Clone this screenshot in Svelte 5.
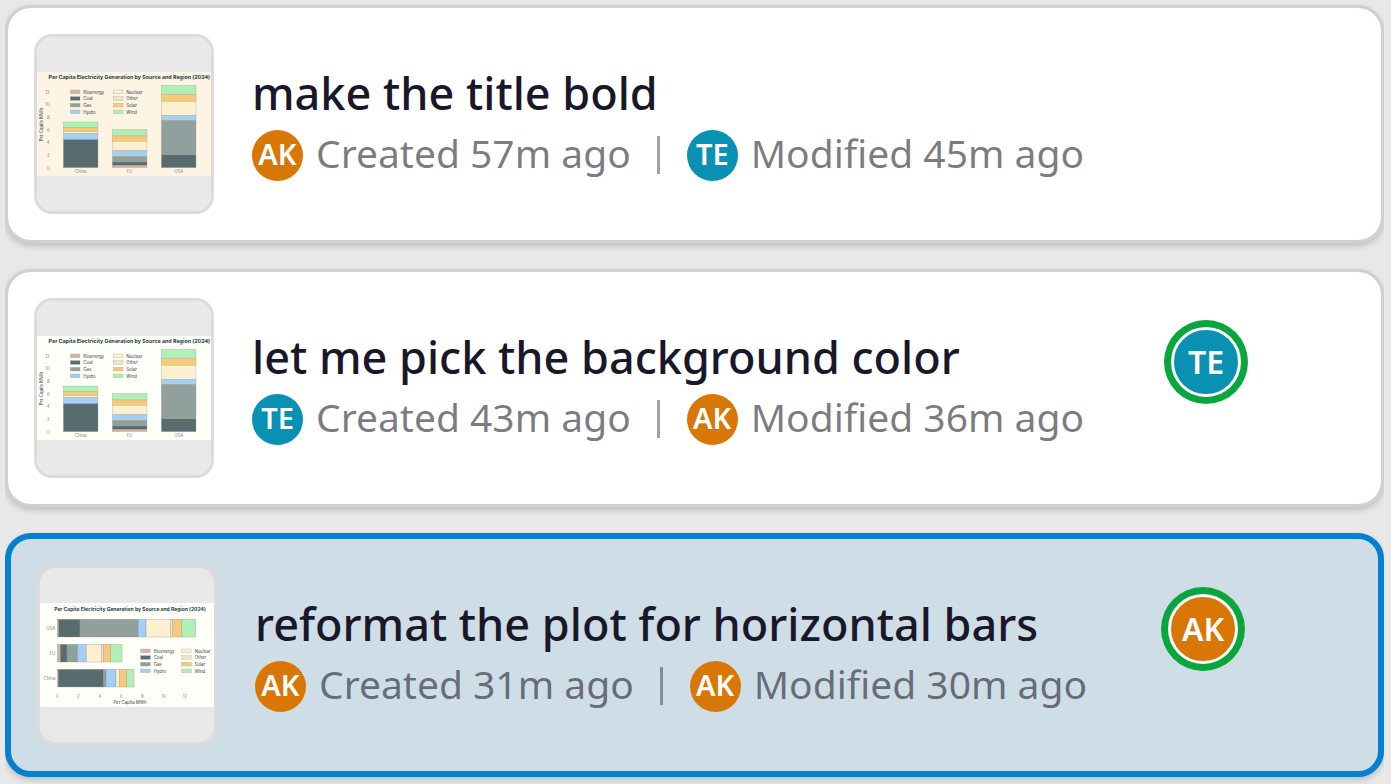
<script>
  const ink = '#1f4045';
  const colors = {
    Bioenergy: '#d5b5ab',
    Coal: '#586c70',
    Gas: '#919f9d',
    Hydro: '#a3cff7',
    Nuclear: '#fcf0d0',
    Other: '#efe3c8',
    Solar: '#f6c981',
    Wind: '#b0efb7'
  };
  const sources = Object.keys(colors);

  // Each segment: [source, start, end] along the bar's own axis.
  const columns = [
    { x: 79, label: 'China', parts: [['Wind', 150, 166], ['Solar', 166, 179], ['Nuclear', 179, 184], ['Hydro', 184, 203], ['Coal', 203, 287]] },
    { x: 226, label: 'EU', parts: [['Wind', 172, 192], ['Solar', 192, 208], ['Nuclear', 208, 236], ['Hydro', 236, 253], ['Gas', 253, 270], ['Coal', 270, 281], ['Bioenergy', 281, 287]] },
    { x: 373, label: 'USA', parts: [['Wind', 40, 67], ['Solar', 67, 88], ['Nuclear', 88, 130], ['Hydro', 130, 145], ['Gas', 145, 248], ['Coal', 248, 287]] }
  ];
  const rows = [
    { y: 49, label: 'USA', parts: [['Bioenergy', 52, 56], ['Coal', 56, 120], ['Gas', 120, 295], ['Hydro', 295, 318], ['Nuclear', 318, 391], ['Other', 391, 397], ['Solar', 397, 425], ['Wind', 425, 467]] },
    { y: 124, label: 'EU', parts: [['Bioenergy', 52, 61], ['Coal', 61, 81], ['Gas', 81, 113], ['Hydro', 113, 139], ['Nuclear', 139, 184], ['Other', 184, 190], ['Solar', 190, 212], ['Wind', 212, 246]] },
    { y: 199, label: 'China', parts: [['Bioenergy', 52, 55], ['Coal', 55, 191], ['Gas', 191, 198], ['Hydro', 198, 228], ['Nuclear', 228, 238], ['Solar', 238, 260], ['Wind', 260, 282]] }
  ];
  const ticks = [0, 2, 4, 6, 8, 10, 12];

  const tones = { AK: '#d97706', TE: '#0891b2' };
  const versions = [
    { title: 'make the title bold', by: 'AK', created: '57m', editor: 'TE', modified: '45m', paper: '#fef4e3' },
    { title: 'let me pick the background color', by: 'TE', created: '43m', editor: 'AK', modified: '36m', paper: '#fffffa', viewer: 'TE' },
    { title: 'reformat the plot for horizontal bars', by: 'AK', created: '31m', editor: 'AK', modified: '30m', paper: '#fffffa', viewer: 'AK', horizontal: true, selected: true }
  ];
</script>

{#snippet legend(x1, x2, y)}
  {#each sources as name, i}
    {@const x = i < 4 ? x1 : x2}
    {@const top = y + (i % 4) * 20}
    <rect {x} y={top} width="29" height="11" fill={colors[name]} stroke="#a69f90" stroke-width="1" />
    <text x={x + 39} y={top + 11} font-size="13" fill={ink}>{name}</text>
  {/each}
{/snippet}

{#snippet chart(version)}
  <svg class="chart" viewBox="0 0 522 312" role="img" aria-label="Per Capita Electricity Generation by Source and Region (2024)">
    <rect width="522" height="312" fill={version.paper} />
    {#if version.horizontal}
      <text x="270" y="23" text-anchor="middle" font-size="15" font-weight="700" fill={ink}>Per Capita Electricity Generation by Source and Region (2024)</text>
      {#each rows as row}
        <text x="46" y={row.y + 31} text-anchor="end" font-size="13" fill="#7e8583">{row.label}</text>
        {#each row.parts as [name, from, to]}
          <rect x={from} y={row.y} width={to - from} height="53" fill={colors[name]} stroke="#8f9286" stroke-width="1" />
        {/each}
      {/each}
      {#each ticks as tick}
        <text x={51 + tick * 32} y="286" text-anchor="middle" font-size="13" fill="#7e8583">{tick}</text>
      {/each}
      <text x="270" y="303" text-anchor="middle" font-size="13" fill={ink}>Per Capita MWh</text>
      {@render legend(302, 425, 138)}
    {:else}
      <text x="277" y="22" text-anchor="middle" font-size="16" font-weight="700" fill={ink}>Per Capita Electricity Generation by Source and Region (2024)</text>
      {#each ticks as tick}
        <text x="38" y={293 - tick * 19} text-anchor="end" font-size="13" fill="#7e8583">{tick}</text>
      {/each}
      <text transform="translate(17 158) rotate(-90)" text-anchor="middle" font-size="13" fill={ink}>Per Capita MWh</text>
      {#each columns as column}
        {#each column.parts as [name, from, to]}
          <rect x={column.x} y={from} width="104" height={to - from} fill={colors[name]} stroke="#a69f90" stroke-width="1" />
        {/each}
        <text x={column.x + 52} y="303" text-anchor="middle" font-size="13" fill="#7e8583">{column.label}</text>
      {/each}
      {@render legend(100, 229, 54)}
    {/if}
  </svg>
{/snippet}

<main>
  <ul>
    {#each versions as version}
      <li class="card" class:selected={version.selected}>
        <div class="thumb">{@render chart(version)}</div>
        <div class="info">
          <h2>{version.title}</h2>
          <div class="meta">
            <span class="avatar" style:background={tones[version.by]}>{version.by}</span>
            <span class="when">Created {version.created} ago</span>
            <span class="divider"></span>
            <span class="avatar" style:background={tones[version.editor]}>{version.editor}</span>
            <span class="when">Modified {version.modified} ago</span>
          </div>
        </div>
        {#if version.viewer}
          <span class="viewer" style:background={tones[version.viewer]}>{version.viewer}</span>
        {/if}
      </li>
    {/each}
  </ul>
</main>

<style>
  :global(body) {
    background: #e8e8e8;
  }
  main {
    padding: 5px 7px 7px 5px;
    font-family: 'Noto Sans', sans-serif;
  }
  ul {
    display: flex;
    flex-direction: column;
    gap: 26px;
    margin: 0;
    padding: 0;
    list-style: none;
    overflow-x: clip;
  }
  .card {
    display: flex;
    align-items: center;
    gap: 38px;
    padding: 26px;
    border: 3px solid #d0d0d0;
    border-radius: 26px;
    background: #fff;
    box-shadow: 0 3px 6px rgba(0, 0, 0, 0.18);
  }
  .selected {
    border: 6px solid #0381cf;
    background: #cfdde6;
  }
  .thumb {
    box-sizing: border-box;
    flex: none;
    display: flex;
    align-items: center;
    width: 180px;
    height: 180px;
    border: 3px solid #dcdcdc;
    border-radius: 18px;
    background: #e8e8e8;
    overflow: hidden;
  }
  .chart {
    display: block;
    width: 100%;
    font-family: Inter, sans-serif;
  }
  .info {
    flex: 1;
    min-width: 0;
    padding-top: 2px;
  }
  h2 {
    margin: 0 0 14px;
    color: #18182a;
    font-size: 45px;
    font-weight: 500;
    line-height: 46px;
    white-space: nowrap;
  }
  .meta {
    display: flex;
    align-items: center;
    color: rgba(22, 22, 36, 0.58);
    font-size: 39px;
    line-height: 46px;
    white-space: nowrap;
  }
  .when {
    padding: 0 0 4px 13px;
  }
  .divider {
    width: 3px;
    height: 38px;
    margin: 0 27px 0 26px;
    background: currentColor;
    opacity: 0.7;
  }
  .avatar,
  .viewer {
    box-sizing: border-box;
    flex: none;
    display: flex;
    align-items: center;
    justify-content: center;
    border-radius: 50%;
    color: #fff;
    font-weight: 600;
  }
  .avatar {
    width: 51px;
    height: 51px;
    padding-bottom: 3px;
    font-size: 29px;
    line-height: 40px;
  }
  .viewer {
    align-self: flex-start;
    width: 70px;
    height: 70px;
    margin: 29px 114px 0 0;
    border: 3px solid #fff;
    box-shadow: 0 0 0 7px #09a63d;
    font-size: 32px;
    line-height: 40px;
  }
</style>
